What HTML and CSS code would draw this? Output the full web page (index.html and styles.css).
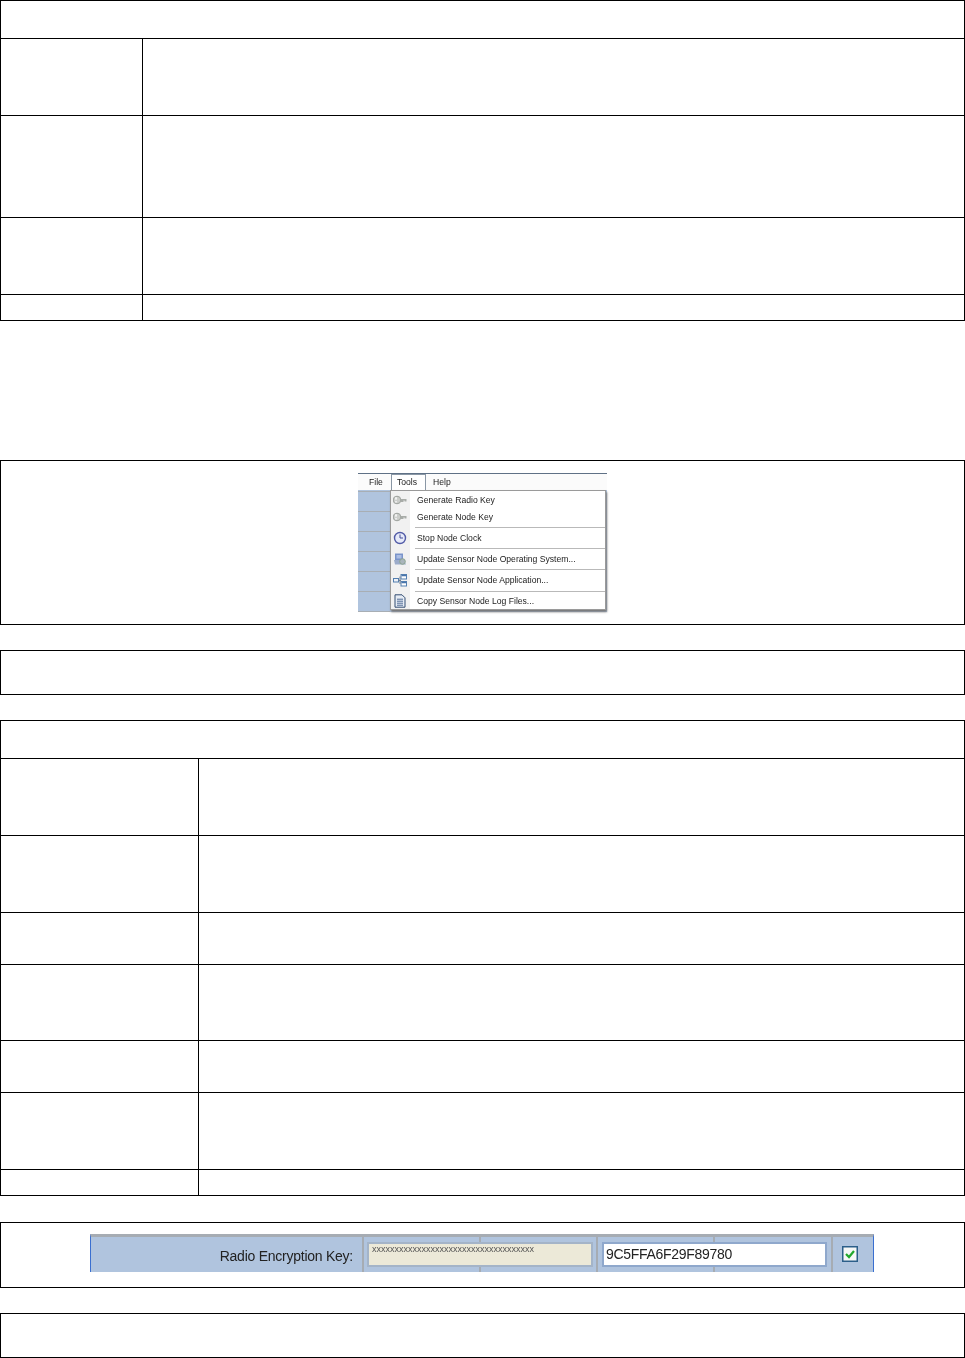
FILE: index.html
```html
<!DOCTYPE html>
<html lang="en">
<head>
  <meta charset="UTF-8">
  <title>Sensor Node Tools</title>
  <link rel="stylesheet" href="styles.css">
</head>
<body>
  <table class="grid grid-narrow">
    <colgroup><col class="col-a"><col></colgroup>
    <tr class="h38"><td colspan="2"></td></tr>
    <tr class="h77"><td></td><td></td></tr>
    <tr class="h102"><td></td><td></td></tr>
    <tr class="h77"><td></td><td></td></tr>
    <tr class="h26"><td></td><td></td></tr>
  </table>

  <div class="box figure-menu">
    <div class="shot">
      <div class="menubar">
        <span class="bar-item bar-file">File</span>
        <span class="bar-item bar-tools">Tools</span>
        <span class="bar-item bar-help">Help</span>
      </div>
      <div class="shot-body">
        <div class="strip"></div>
        <div class="dropdown">
          <div class="item">
            <svg class="icon" viewBox="0 0 14 14"><circle cx="4" cy="7" r="3.800" fill="#c9ccc8" stroke="#989c98"/><ellipse cx="3" cy="5.500" rx="1" ry="1.400" fill="#f6f6f6"/><ellipse cx="3" cy="8.800" rx="1" ry="1" fill="#f0f0f0"/><path d="M7.500 6h6v2.500h-2v-1h-1v1.500h-3z" fill="#a4a8a4"/></svg>
            <span>Generate Radio Key</span>
          </div>
          <div class="item">
            <svg class="icon" viewBox="0 0 14 14"><circle cx="4" cy="7" r="3.800" fill="#c9ccc8" stroke="#989c98"/><ellipse cx="3" cy="5.500" rx="1" ry="1.400" fill="#f6f6f6"/><ellipse cx="3" cy="8.800" rx="1" ry="1" fill="#f0f0f0"/><path d="M7.500 6h6v2.500h-2v-1h-1v1.500h-3z" fill="#a4a8a4"/></svg>
            <span>Generate Node Key</span>
          </div>
          <div class="sep"></div>
          <div class="item">
            <svg class="icon" viewBox="0 0 14 14"><circle cx="7" cy="7" r="5.500" fill="#e6eafa" stroke="#4a54a4" stroke-width="1.400"/><path d="M7 3.500V7h3" fill="none" stroke="#3c4590"/></svg>
            <span>Stop Node Clock</span>
          </div>
          <div class="sep"></div>
          <div class="item">
            <svg class="icon" viewBox="0 0 14 14"><rect x="2" y="1.500" width="8" height="6.500" fill="#7490c8"/><rect x="3.500" y="3" width="5" height="3.500" fill="#a9bce4"/><path d="M1 8h10l2 4.500H2z" fill="#98a9c8"/><circle cx="9.500" cy="9.500" r="2.800" fill="#a6b2ba" stroke="#86a08a"/></svg>
            <span>Update Sensor Node Operating System...</span>
          </div>
          <div class="sep"></div>
          <div class="item">
            <svg class="icon" viewBox="0 0 14 14"><rect x="0.500" y="5.500" width="5" height="3.500" fill="#eef2f8" stroke="#4a78ac"/><rect x="8" y="1.500" width="5.500" height="4.500" fill="#fff" stroke="#4a78ac"/><rect x="8" y="8.500" width="5.500" height="4.500" fill="#fff" stroke="#4a78ac"/><path d="M5.500 7.500H8M7 3.500v7.500" fill="none" stroke="#68788c"/><path d="M8.500 2h4.500v1.200H8.500zM8.500 9h4.500v1.200H8.500z" fill="#3f6ea8"/></svg>
            <span>Update Sensor Node Application...</span>
          </div>
          <div class="sep sep-last"></div>
          <div class="item">
            <svg class="icon" viewBox="0 0 14 14"><path d="M2 .800h7l3 3V13.200H2z" fill="#e6ecf5" stroke="#29456b"/><path d="M4 5.200h6M4 7.200h6M4 9.200h6M4 11.200h6" stroke="#486690"/></svg>
            <span>Copy Sensor Node Log Files...</span>
          </div>
        </div>
      </div>
    </div>
  </div>

  <div class="box box-note"></div>

  <table class="grid grid-wide">
    <colgroup><col class="col-b"><col></colgroup>
    <tr class="h38"><td colspan="2"></td></tr>
    <tr class="h77"><td></td><td></td></tr>
    <tr class="h77"><td></td><td></td></tr>
    <tr class="h52"><td></td><td></td></tr>
    <tr class="h76"><td></td><td></td></tr>
    <tr class="h52"><td></td><td></td></tr>
    <tr class="h77"><td></td><td></td></tr>
    <tr class="h26"><td></td><td></td></tr>
  </table>

  <div class="box figure-key">
    <div class="keybar">
      <div class="key-label">Radio Encryption Key:</div>
      <div class="key-input key-masked">xxxxxxxxxxxxxxxxxxxxxxxxxxxxxxxxxxxx</div>
      <div class="key-input key-value">9C5FFA6F29F89780</div>
      <div class="key-check">
        <svg viewBox="0 0 16 16" width="16" height="16"><rect x="0.750" y="0.750" width="14.500" height="14.500" fill="#f6f8f6" stroke="#2c5f8a" stroke-width="1.500"/><path d="M4 8l3 3 5-6" fill="none" stroke="#22a82c" stroke-width="2.200"/></svg>
      </div>
    </div>
  </div>

  <div class="box box-note box-last"></div>
</body>
</html>
```

FILE: styles.css
```css
body {
    margin: 0;
    background: #fff;
    font-family: "Liberation Sans", Arial, sans-serif;
}
.grid {
    width: 965px;
    border-collapse: collapse;
    table-layout: fixed;
}
.grid td {
    border: 1px solid #000;
    padding: 0;
}
.grid-wide {
    margin-top: 25px;
}
.col-a {
    width: 142px;
}
.col-b {
    width: 198px;
}
.h26 { height: 26px; }
.h38 { height: 38px; }
.h52 { height: 52px; }
.h76 { height: 76px; }
.h77 { height: 77px; }
.h102 { height: 102px; }
.box {
    box-sizing: border-box;
    width: 965px;
    border: 1px solid #000;
}
.box-note {
    height: 45px;
    margin-top: 25px;
}
.box-last {
    margin-top: 25px;
}

/* tools menu screenshot */
.figure-menu {
    height: 165px;
    margin-top: 139px;
    padding-top: 12px;
    display: flex;
    justify-content: center;
}
.shot {
    width: 249px;
    height: 139px;
    display: flex;
    flex-direction: column;
    font-size: 8.6px;
    color: #222;
    filter: blur(0.3px);
}
.menubar {
    height: 17px;
    flex-shrink: 0;
    display: flex;
    box-sizing: border-box;
    border-top: 1px solid #5f7186;
    background: #fbfbfb;
}
.bar-item {
    line-height: 17px;
}
.bar-file {
    margin-left: 11px;
    width: 22px;
}
.bar-tools {
    width: 35px;
    box-sizing: border-box;
    padding-left: 5px;
    background: #fff;
    border: 1px solid #8a97a5;
    border-bottom: none;
    line-height: 15px;
}
.bar-help {
    margin-left: 7px;
}
.shot-body {
    flex: 1;
    display: flex;
    background: #b0c4de;
}
.strip {
    width: 32px;
    background-image: linear-gradient(#b0c4de 18.8px, #a8aeb4 18.8px);
    background-size: 100% 20px;
    background-position: 0 2px;
}
.dropdown {
    width: 216px;
    height: 120px;
    box-sizing: border-box;
    border: 1px solid #9a9a9a;
    background: linear-gradient(90deg, #f1f1f1 19px, #fff 19px);
    box-shadow: 1px 2px 2px #777;
}
.item {
    height: 17px;
    display: flex;
    align-items: center;
    white-space: nowrap;
}
.icon {
    width: 14px;
    height: 14px;
    margin: 0 9px 0 2px;
    flex-shrink: 0;
    opacity: 0.95;
}
.item span {
    margin-left: 1px;
}
.sep {
    height: 1px;
    margin: 2px 0 1px 24px;
    background: #b9b9b9;
}
.sep-last {
    margin: 3px 0 0 24px;
}

/* radio key screenshot */
.figure-key {
    height: 66px;
    margin-top: 26px;
    padding-top: 11px;
    display: flex;
    justify-content: center;
}
.keybar {
    --line: linear-gradient(#a6acb3, #a6acb3);
    width: 784px;
    height: 38px;
    margin-left: -1px;
    box-sizing: border-box;
    display: flex;
    border-top: 3px solid #a6acb3;
    border-left: 1px solid #3a6fd0;
    border-right: 1px solid #3a6fd0;
    background-color: #b0c4de;
    background-image: var(--line), var(--line), var(--line), var(--line), var(--line);
    background-size: 2px 100%;
    background-position: 271px 0, 388px 0, 505px 0, 622px 0, 740px 0;
    background-repeat: no-repeat;
    filter: blur(0.3px);
}
.key-label {
    width: 262px;
    text-align: right;
    font-size: 14px;
    letter-spacing: -0.25px;
    line-height: 38px;
    color: #222;
    flex-shrink: 0;
}
.key-input {
    box-sizing: border-box;
    height: 25px;
    margin-top: 5px;
    flex-shrink: 0;
}
.key-masked {
    width: 226px;
    margin-left: 14px;
    border: 2px solid #a4b4c8;
    background: #ece9d8;
    color: #555;
    font-size: 9px;
    line-height: 11px;
    padding-left: 3px;
    overflow: hidden;
}
.key-value {
    width: 225px;
    margin-left: 9px;
    border: 2px solid #8fa8cc;
    background: #fff;
    color: #222;
    font-size: 14px;
    letter-spacing: -0.3px;
    line-height: 21px;
    padding-left: 2px;
}
.key-check {
    margin: 9px 0 0 15px;
    width: 16px;
    height: 16px;
}
```
